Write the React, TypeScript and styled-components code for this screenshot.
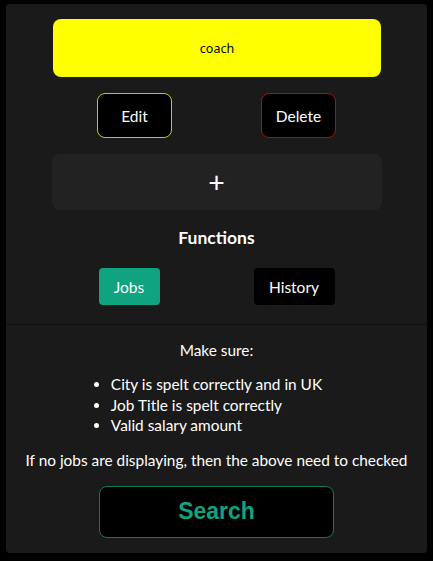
import React from "react";
import styled, { createGlobalStyle } from "styled-components";

const Global = createGlobalStyle`
  html, body { margin: 0; padding: 0; background: #000; }
  body { font-family: Lato, "Noto Sans", sans-serif; color: #fff; }
  * { box-sizing: border-box; }
`;

const Panel = styled.div`
  margin: 4px 6px 0;
  width: 421px;
  height: 549px;
  background: #1a1a1a;
  border-radius: 4px;
  display: flex;
  flex-direction: column;
`;

const TopSection = styled.section`
  display: flex;
  flex-direction: column;
  align-items: center;
  padding: 15px 0 19px;
  border-bottom: 1px solid #0e0e0e;
`;

const JobCard = styled.div`
  width: 328px;
  height: 58px;
  background: #ffff00;
  border-radius: 8px;
  display: flex;
  align-items: center;
  justify-content: center;
  color: #000;
  font-family: "Noto Sans", sans-serif;
  font-size: 12.5px;
  margin-left: 1px;
`;

const Row = styled.div<{ $width: number; $top: number }>`
  width: ${(p) => p.$width}px;
  margin-top: ${(p) => p.$top}px;
  display: flex;
  justify-content: space-around;
`;

const OutlineButton = styled.button<{ $border: string }>`
  width: 75px;
  height: 45px;
  background: #000;
  border: 1.2px solid ${(p) => p.$border};
  border-radius: 8px;
  color: #fff;
  font-family: Lato, sans-serif;
  font-size: 15.5px;
  display: flex;
  align-items: center;
  justify-content: center;
  padding: 0;
`;

const AddBox = styled.button`
  width: 330px;
  height: 56px;
  margin-top: 16px;
  background: #222222;
  border: none;
  border-radius: 8px;
  color: #fff;
  font-family: "Noto Sans", sans-serif;
  font-size: 29px;
  font-weight: 400;
  display: flex;
  align-items: center;
  justify-content: center;
  padding: 0 0 2px;
`;

const Heading = styled.h3`
  margin: 16px 0 0;
  font-size: 17.5px;
  line-height: 23px;
  font-weight: 700;
`;

const FnButton = styled.button<{ $bg: string; $w: number }>`
  width: ${(p) => p.$w}px;
  height: 37px;
  background: ${(p) => p.$bg};
  border: none;
  border-radius: 4px;
  color: #fff;
  font-family: Lato, sans-serif;
  font-size: 15.5px;
  display: flex;
  align-items: center;
  justify-content: center;
  padding: 0;
`;

const BottomSection = styled.section`
  display: flex;
  flex-direction: column;
  align-items: center;
  padding-top: 15px;
`;

const Text = styled.p`
  margin: 0;
  font-size: 15.4px;
  line-height: 21px;
`;

const List = styled.ul`
  margin: 13px auto 0;
  padding: 0;
  width: fit-content;
  font-size: 15.4px;
  line-height: 20.5px;
`;

const Note = styled(Text)`
  margin-top: 14px;
`;

const SearchButton = styled.button`
  margin-top: 15px;
  width: 235px;
  height: 52px;
  background: #000;
  border: 1px solid #10795c;
  border-radius: 8px;
  color: #10a37f;
  font-family: "Liberation Sans", Arial, sans-serif;
  font-weight: 700;
  font-size: 23px;
  padding: 0;
`;

export default function App() {
  return (
    <>
      <Global />
      <Panel>
        <TopSection>
          <JobCard>coach</JobCard>
          <Row $width={328} $top={16}>
            <OutlineButton $border="#c8c800">Edit</OutlineButton>
            <OutlineButton $border="#d00000">Delete</OutlineButton>
          </Row>
          <AddBox>+</AddBox>
          <Heading>Functions</Heading>
          <Row $width={330} $top={19}>
            <FnButton $bg="#10a37f" $w={61}>Jobs</FnButton>
            <FnButton $bg="#000" $w={81}>History</FnButton>
          </Row>
        </TopSection>
        <BottomSection>
          <Text>Make sure:</Text>
          <List>
            <li>City is spelt correctly and in UK</li>
            <li>Job Title is spelt correctly</li>
            <li>Valid salary amount</li>
          </List>
          <Note>If no jobs are displaying, then the above need to checked</Note>
          <SearchButton>Search</SearchButton>
        </BottomSection>
      </Panel>
    </>
  );
}
